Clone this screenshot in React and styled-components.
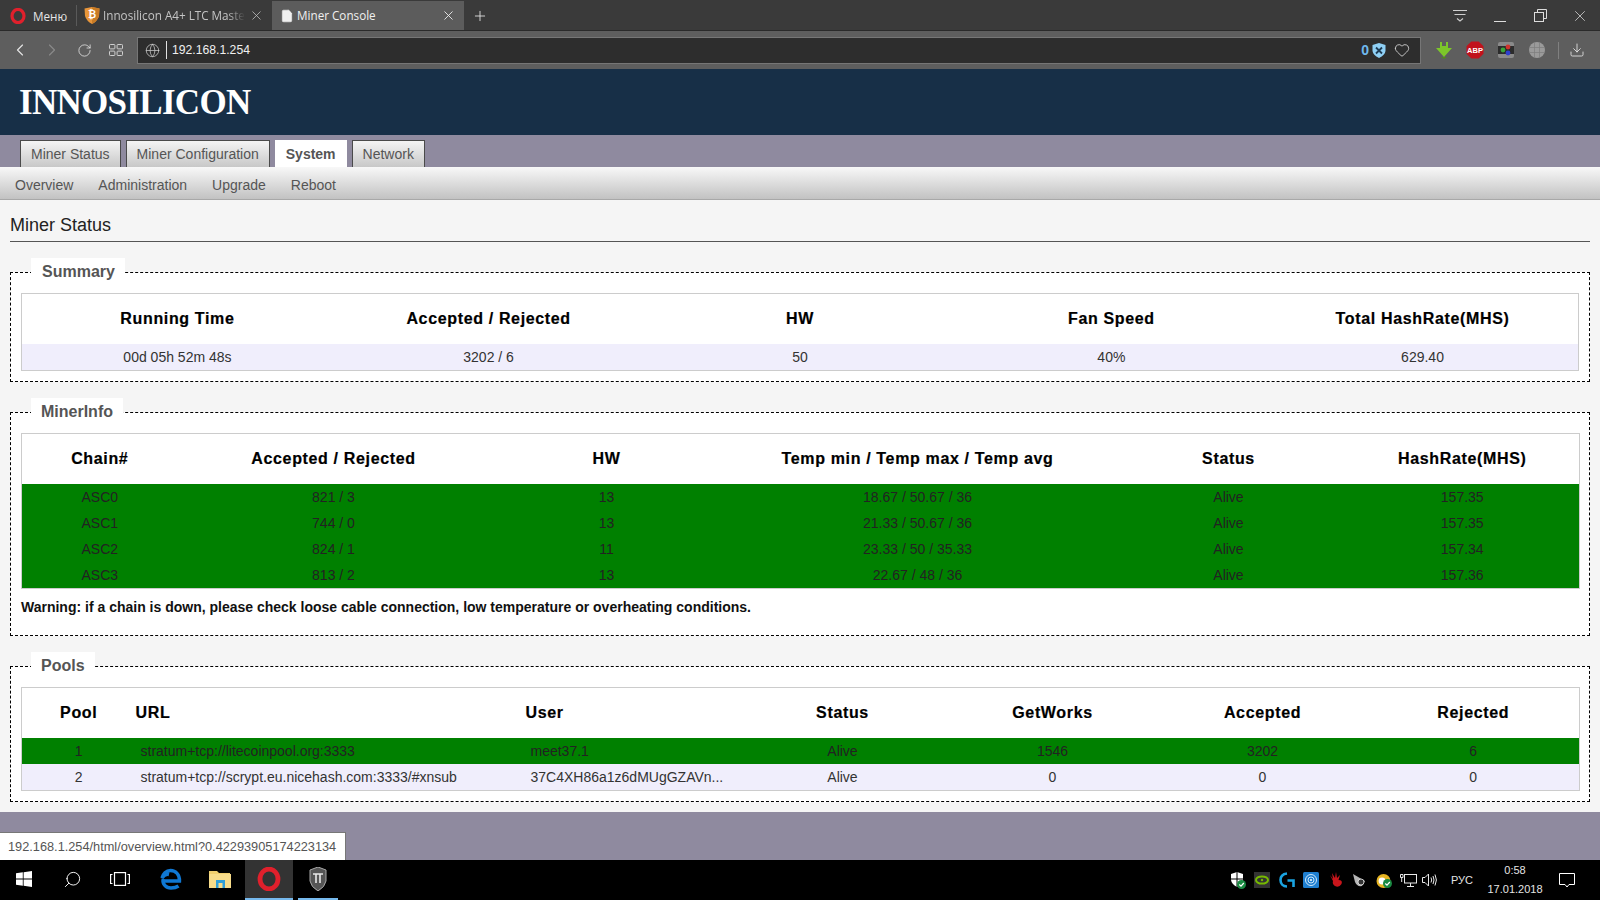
import styled, { createGlobalStyle } from 'styled-components';
import { ChevronLeft, ChevronRight, RotateCw, X, Plus, Heart, Download, Globe, Search, File } from 'lucide-react';

const GlobalStyle = createGlobalStyle`
  html, body {
    margin: 0;
    padding: 0;
    height: 100%;
    overflow: hidden;
    font-family: "Liberation Sans", Arial, sans-serif;
  }
`;

const Screen = styled.div`
  position: relative;
  display: flex;
  flex-direction: column;
  width: 1600px;
  height: 900px;
  overflow: hidden;
  background: #8f8a9f;
`;

/* browser chrome */
const TabStrip = styled.div`
  display: flex;
  align-items: stretch;
  height: 31px;
  flex: none;
  padding-top: 1px;
  box-sizing: border-box;
  background: #3a3a3a;
  border-bottom: 1px solid #2a2a2a;
  color: #e6e6e6;
  font-family: "Open Sans", sans-serif;
  font-size: 11.7px;
`;

const MenuButton = styled.div`
  display: flex;
  align-items: center;
  gap: 7px;
  width: 77px;
  padding-left: 10px;
  box-sizing: border-box;
  border-right: 1px solid #5a5a5a;
  margin: 4px 0;
`;

const BrowserTab = styled.div`
  display: flex;
  align-items: center;
  width: ${p => (p.$active ? '192px' : '195px')};
  padding: 0 8px 0 ${p => (p.$active ? '8px' : '7px')};
  box-sizing: border-box;
  gap: 3px;
  background: ${p => (p.$active ? '#5c5c5c' : 'transparent')};
  color: ${p => (p.$active ? '#f0f0f0' : '#c4c4c4')};
`;

const TabLabel = styled.span`
  white-space: nowrap;
  margin: -1px auto 0 0;
  mask-image: ${p => (p.$fade ? 'linear-gradient(to right, #000 88%, transparent 100%)' : 'none')};
`;

const NewTab = styled.div`
  display: flex;
  align-items: center;
  margin-left: 8px;
`;

const WindowControls = styled.div`
  display: flex;
  align-items: center;
  margin-left: auto;
`;

const WindowButton = styled.div`
  display: flex;
  align-items: center;
  justify-content: center;
  width: 40px;
  height: 30px;
`;

const Toolbar = styled.div`
  display: flex;
  align-items: center;
  height: 38px;
  flex: none;
  padding-left: 4px;
  background: #5e5e5e;
`;

const ToolButton = styled.div`
  display: flex;
  align-items: center;
  justify-content: center;
  width: 32px;
  height: 31px;
  color: ${p => (p.$dim ? '#8a8a8a' : '#e4e4e4')};
`;

const AddressBar = styled.div`
  display: flex;
  align-items: center;
  flex: 1;
  height: 27px;
  margin: 0 7px 0 5px;
  padding: 0 10px 0 7px;
  box-sizing: border-box;
  background: #2d2d2d;
  border: 1px solid #767676;
  color: #f0f0f0;
  font-size: 12.2px;
`;

const AddressDivider = styled.span`
  width: 1px;
  height: 18px;
  margin: 0 5px 0 6px;
  background: #e0e0e0;
`;

const AddressEnd = styled.div`
  display: flex;
  align-items: center;
  gap: 8px;
  margin-left: auto;
  color: #6fb9ee;
  font-weight: bold;
  font-size: 14px;
`;

const BlockCount = styled.span`
  margin-right: -5px;
`;

const Extensions = styled.div`
  display: flex;
  align-items: center;
  width: 172px;
  flex: none;
`;

const ExtensionSlot = styled.div`
  display: flex;
  align-items: center;
  justify-content: center;
  width: 31px;
  height: 30px;
`;

const ToolDivider = styled.span`
  width: 1px;
  height: 17px;
  margin: 0 10px 0 6px;
  background: #808080;
`;

/* miner page */
const Banner = styled.header`
  display: flex;
  align-items: center;
  height: 66px;
  flex: none;
  padding-left: 19px;
  box-sizing: border-box;
  background: #172f47;
`;

const Logo = styled.div`
  color: #fff;
  font-family: "Liberation Serif", serif;
  font-weight: bold;
  font-size: 35px;
  letter-spacing: -0.7px;
  line-height: 1;
`;

const MainNav = styled.nav`
  display: flex;
  align-items: flex-end;
  gap: 5px;
  height: 32px;
  flex: none;
  padding-left: 20px;
  box-sizing: border-box;
  background: #8f8a9f;
`;

const NavTab = styled.a`
  display: flex;
  align-items: center;
  height: 27px;
  padding: 0 ${p => (p.$active ? '11px' : '10px')};
  box-sizing: border-box;
  font-size: 14px;
  color: #555;
  font-weight: ${p => (p.$active ? 'bold' : 'normal')};
  background: ${p => (p.$active ? '#fff' : 'linear-gradient(#f4f4f4, #c8c8c8)')};
  border: ${p => (p.$active ? 'none' : '1px solid #4a4a4a')};
  border-bottom: none;
`;

const SubNav = styled.nav`
  display: flex;
  align-items: center;
  gap: 25px;
  height: 33px;
  flex: none;
  padding: 3px 0 0 15px;
  box-sizing: border-box;
  font-size: 14px;
  color: #555;
  background: linear-gradient(#f8f8f8, #c2c2c2);
  border-bottom: 1px solid #a8a8a8;
`;

const Content = styled.main`
  flex: none;
  height: 612px;
  padding: 0 10px;
  box-sizing: border-box;
  background: #f5f5f5;
`;

const PageTitle = styled.h2`
  margin: 0 0 16px;
  height: 42px;
  padding-top: 14px;
  box-sizing: border-box;
  font-size: 18px;
  line-height: 22px;
  font-weight: normal;
  color: #222;
  border-bottom: 1px solid #555;
`;

const Panel = styled.fieldset`
  margin: 0 0 16px;
  padding: 7px 10px 10px;
  min-width: 0;
  background: #fff;
  border: 1px dashed #000;
`;

const PanelTitle = styled.legend`
  margin-left: 10px;
  padding: 0 10px 0 ${p => p.$pad || 11}px;
  height: 28px;
  line-height: 28px;
  background: #fff;
  color: #555;
  font-size: 16px;
  font-weight: bold;
`;

const DataTable = styled.table`
  width: 100%;
  table-layout: fixed;
  border-collapse: collapse;
  border: 1px solid #ccc;
  font-size: 14px;
  color: #333;
`;

const Col = styled.col`
  width: ${p => p.$w}px;
`;

const HeadCell = styled.th`
  height: 50px;
  padding: 0;
  color: #000;
  font-size: 16px;
  letter-spacing: 0.65px;
  -webkit-text-stroke: 0.2px #000;
  text-align: ${p => (p.$left ? 'left' : 'center')};
`;

const Row = styled.tr`
  background: ${p => (p.$ok ? '#008000' : '#f0eefc')};
  color: ${p => (p.$ok ? '#222' : '#333')};
`;

const Cell = styled.td`
  height: 26px;
  padding: ${p => (p.$left ? '0 0 0 5px' : '0')};
  text-align: ${p => (p.$left ? 'left' : 'center')};
`;

const Warning = styled.p`
  margin: 10px 0;
  font-size: 14px;
  line-height: 16px;
  font-weight: bold;
  color: #111;
`;

const StatusTip = styled.div`
  position: absolute;
  left: 0;
  bottom: 40px;
  width: 346px;
  height: 28px;
  padding-left: 8px;
  box-sizing: border-box;
  line-height: 28px;
  font-size: 12.75px;
  color: #555;
  background: #fff;
  border-top: 1px solid #777;
  border-right: 1px solid #777;
  white-space: nowrap;
`;

/* taskbar */
const Taskbar = styled.footer`
  display: flex;
  align-items: stretch;
  height: 40px;
  margin-top: auto;
  flex: none;
  background: #000;
`;

const TaskItem = styled.div`
  display: flex;
  align-items: center;
  justify-content: center;
  width: ${p => p.$w || 48}px;
  margin-left: ${p => p.$gap || 0}px;
  background: ${p => (p.$active ? '#333' : 'transparent')};
  border-bottom: 2px solid ${p => (p.$open ? '#76b9ed' : 'transparent')};
  box-sizing: border-box;
`;

const Tray = styled.div`
  display: flex;
  align-items: center;
  margin-left: auto;
  padding-right: 25px;
  color: #e4e4e4;
`;

const TraySlot = styled.div`
  display: flex;
  align-items: center;
  justify-content: center;
  width: ${p => p.$w || 24.5}px;
  height: 40px;
`;

const Lang = styled.span`
  width: 42px;
  text-align: center;
  font-size: 11px;
`;

const Clock = styled.div`
  width: 64px;
  margin-right: 12px;
  font-size: 11px;
  line-height: 19px;
  text-align: center;
`;

const OperaLogo = ({ size = 16 }) => (
  <svg width={size} height={size} viewBox="0 0 16 16">
    <ellipse cx="8" cy="8" rx="6" ry="6.6" fill="none" stroke="#e0202c" strokeWidth="3.2" />
  </svg>
);

const BitcoinShield = () => (
  <svg width="16" height="17" viewBox="0 0 16 17">
    <path d="M0.5 1.5 L8 0 L15.5 1.5 L15 9 Q13.5 14 8 17 Q2.5 14 1 9 Z" fill="#e8963a" />
    <path d="M8 0 L15.5 1.5 L15 9 Q13.5 14 8 17 Z" fill="#c97b25" />
    <text x="8" y="11" fontSize="10" fontWeight="bold" fill="#fff" textAnchor="middle" fontFamily="Liberation Sans">₿</text>
  </svg>
);

const SpeedDial = () => (
  <svg width="14" height="12" viewBox="0 0 14 12" fill="none" stroke="#cfcfcf" strokeWidth="1">
    <rect x="0.5" y="0.5" width="5.4" height="4.4" rx="0.8" />
    <rect x="8.1" y="0.5" width="5.4" height="4.4" rx="0.8" />
    <rect x="0.5" y="7.1" width="5.4" height="4.4" rx="0.8" />
    <rect x="8.1" y="7.1" width="5.4" height="4.4" rx="0.8" />
  </svg>
);

const Tabs3 = () => (
  <svg width="16" height="16" viewBox="0 0 16 16" fill="none" stroke="#cfcfcf" strokeWidth="1.1">
    <path d="M1 2.5H15M2.5 6.5H13.5M5 10.5L8 13L11 10.5" />
  </svg>
);

const Minimize = () => (
  <svg width="14" height="14" viewBox="0 0 14 14"><path d="M1 12.5H13" stroke="#ddd" strokeWidth="1" /></svg>
);

const Restore = () => (
  <svg width="13" height="13" viewBox="0 0 13 13" fill="none" stroke="#ddd" strokeWidth="1">
    <rect x="0.5" y="3.5" width="9" height="9" />
    <path d="M3.5 3.5V0.5H12.5V9.5H9.5" />
  </svg>
);

const BlockShield = () => (
  <svg width="14" height="15" viewBox="0 0 14 15">
    <path d="M0.5 2 L7 0 L13.5 2 V8 Q13 12 7 15 Q1 12 0.5 8 Z" fill="#8fd0f5" />
    <path d="M4 4.5L10 10.5M10 4.5L4 10.5" stroke="#1e3c55" strokeWidth="1.8" />
  </svg>
);

const DownArrowExt = () => (
  <svg width="16" height="17" viewBox="0 0 16 17">
    <path d="M4 0H6V4H10V0H12V6H16L8 15L0 6H4Z" fill="#7cc62a" />
    <path d="M5 15H11L8 17Z" fill="#4e8a1c" />
  </svg>
);

const AbpBadge = () => (
  <svg width="18" height="18" viewBox="0 0 18 18">
    <path d="M5.3 0.5H12.7L17.5 5.3V12.7L12.7 17.5H5.3L0.5 12.7V5.3Z" fill="#c1121c" />
    <text x="9" y="12" fontSize="7.5" fontWeight="bold" fill="#fff" textAnchor="middle" fontFamily="Liberation Sans">ABP</text>
  </svg>
);

const ColorExt = () => (
  <svg width="16" height="16" viewBox="0 0 16 16">
    <rect width="16" height="16" rx="2" fill="#8a8a8a" />
    <rect y="4" width="16" height="8" fill="#2c2c2c" />
    <circle cx="5" cy="8" r="2.4" fill="#3aa53a" />
    <circle cx="10" cy="5" r="2.4" fill="#d0352c" />
    <circle cx="10" cy="11" r="2.4" fill="#2d3fd0" />
  </svg>
);

const WorldExt = () => (
  <svg width="16" height="16" viewBox="0 0 16 16" fill="none">
    <circle cx="8" cy="8" r="8" fill="#9a9a9a" />
    <path d="M0 5.5H16M0 10.5H16M5.5 0V16M10.5 0V16" stroke="#7d7d7d" strokeWidth="0.7" />
  </svg>
);

const WinLogo = () => (
  <svg width="16" height="16" viewBox="0 0 16 16" fill="#fff">
    <path d="M0 2.3L6.8 1.3V7.6H0ZM7.6 1.2L16 0V7.6H7.6ZM0 8.4H6.8V14.7L0 13.7ZM7.6 8.4H16V16L7.6 14.8Z" />
  </svg>
);

const TaskView = () => (
  <svg width="20" height="14" viewBox="0 0 20 14" fill="none" stroke="#fff" strokeWidth="1.2">
    <rect x="4.5" y="0.6" width="11" height="12.8" />
    <path d="M2.5 2.5H0.6V11.5H2.5M17.5 2.5H19.4V11.5H17.5" />
  </svg>
);

const EdgeLogo = () => (
  <svg width="22" height="22" viewBox="0 0 22 22" fill="none">
    <path d="M3 13H19.5C19.8 7 16 2.5 10.5 2.5C6 2.5 3 6 2 10C4 7 7 6 9 6.5" stroke="#0f78d4" strokeWidth="3.4" />
    <path d="M3.2 11C2 16 6 20 11 20C14 20 16.5 19.4 18.5 18" stroke="#0f78d4" strokeWidth="3.4" />
  </svg>
);

const FolderIcon = () => (
  <svg width="22" height="20" viewBox="0 0 22 20">
    <path d="M0 2H8L10 4H21V19H0Z" fill="#f0cf6e" />
    <rect y="5" width="22" height="14" fill="#f7dc8a" />
    <rect x="7" y="11" width="9" height="8" fill="#2f9fd8" />
    <rect x="9.5" y="14" width="4" height="5" fill="#f7dc8a" />
  </svg>
);

const TankShield = () => (
  <svg width="18" height="24" viewBox="0 0 18 24">
    <path d="M1 3L9 0L17 3V14Q16 20 9 24Q2 20 1 14Z" fill="#555" stroke="#a8a8a8" />
    <path d="M4 7H14M7 7V16M11 7V16" stroke="#e8e8e8" strokeWidth="1.6" />
  </svg>
);

const DefenderTray = () => (
  <svg width="16" height="17" viewBox="0 0 16 17">
    <path d="M1 2L7 0L13 2V8Q12.5 12 7 15Q1.5 12 1 8Z" fill="#fff" />
    <path d="M7 0V15M1 7H13" stroke="#000" strokeWidth="1" />
    <circle cx="11.5" cy="12.5" r="4.5" fill="#1a8a42" />
    <path d="M9.3 12.5L11 14.2L13.8 11" stroke="#fff" strokeWidth="1.2" fill="none" />
  </svg>
);

const NvidiaTray = () => (
  <svg width="16" height="16" viewBox="0 0 16 16">
    <rect width="16" height="16" fill="#333" />
    <ellipse cx="8" cy="8" rx="6" ry="3.6" fill="none" stroke="#76b900" strokeWidth="2" />
    <circle cx="8" cy="8" r="1.2" fill="#76b900" />
  </svg>
);

const LogitechTray = () => (
  <svg width="16" height="16" viewBox="0 0 16 16" fill="none" stroke="#1aa3e0" strokeWidth="2.6">
    <path d="M8 1.5C4 2 1.5 4.5 1.5 8C1.5 11.5 4 14.5 8 14.5" />
    <path d="M8.5 8.5H14.5V15" />
  </svg>
);

const RadarTray = () => (
  <svg width="16" height="16" viewBox="0 0 16 16" fill="none">
    <rect width="16" height="16" rx="1.5" fill="#1f7fd0" />
    <circle cx="8" cy="8" r="5.5" stroke="#cfe8fb" strokeWidth="1" />
    <circle cx="8" cy="8" r="3" stroke="#cfe8fb" strokeWidth="1" />
    <circle cx="8" cy="8" r="1" fill="#fff" />
  </svg>
);

const BloodyTray = () => (
  <svg width="16" height="16" viewBox="0 0 16 16">
    <path d="M2 3L5 7L4 1L7 6L8 0L9 6L12 3L10.5 8Q15 8 13.5 12Q11 16 7 14Q4 12 5 9Z" fill="#c8151b" />
  </svg>
);

const SpeakerTray = () => (
  <svg width="16" height="16" viewBox="0 0 16 16">
    <path d="M1 2L13 9L10 14Q5 15 3 10Z" fill="#b5b5b5" />
    <circle cx="9" cy="10" r="3" fill="#333" stroke="#eee" strokeWidth="0.8" />
  </svg>
);

const CheckTray = () => (
  <svg width="17" height="17" viewBox="0 0 17 17">
    <circle cx="7.5" cy="9" r="7" fill="#e6b422" />
    <circle cx="6" cy="9" r="3.4" fill="#fff" />
    <circle cx="11.5" cy="11.5" r="4.5" fill="#1a8a42" />
    <path d="M9.3 11.5L11 13.2L13.8 10" stroke="#fff" strokeWidth="1.2" fill="none" />
  </svg>
);

const NetworkTray = () => (
  <svg width="17" height="15" viewBox="0 0 17 15" fill="none" stroke="#e8e8e8" strokeWidth="1">
    <rect x="4.5" y="1.5" width="12" height="8.5" />
    <path d="M10.5 10V13.5M7 13.5H14M0.5 1.5H3V4.5H0.5ZM1.7 4.5V9" />
  </svg>
);

const VolumeTray = () => (
  <svg width="16" height="14" viewBox="0 0 16 14" fill="none" stroke="#e8e8e8" strokeWidth="1">
    <path d="M0.5 4.5H3L6.5 1V13L3 9.5H0.5Z" />
    <path d="M9 4.5Q10.4 7 9 9.5M11 3Q13 7 11 11M13 1.5Q15.8 7 13 12.5" />
  </svg>
);

const NotifyIcon = () => (
  <svg width="16" height="16" viewBox="0 0 16 16" fill="none" stroke="#fff" strokeWidth="1">
    <path d="M0.5 1.5H15.5V12.5H10L8 15L6 12.5H0.5Z" />
  </svg>
);

const App = () => {
  const chains = [
    ['ASC0', '821 / 3', '13', '18.67 / 50.67 / 36', 'Alive', '157.35'],
    ['ASC1', '744 / 0', '13', '21.33 / 50.67 / 36', 'Alive', '157.35'],
    ['ASC2', '824 / 1', '11', '23.33 / 50 / 35.33', 'Alive', '157.34'],
    ['ASC3', '813 / 2', '13', '22.67 / 48 / 36', 'Alive', '157.36'],
  ];

  return (
    <Screen>
      <GlobalStyle />
      <TabStrip>
        <MenuButton>
          <OperaLogo />
          <span>Меню</span>
        </MenuButton>
        <BrowserTab>
          <BitcoinShield />
          <TabLabel $fade>Innosilicon A4+ LTC Maste</TabLabel>
          <X size={15} strokeWidth={1.2} />
        </BrowserTab>
        <BrowserTab $active>
          <File size={14} fill="#f0f0f0" strokeWidth={1} />
          <TabLabel>Miner Console</TabLabel>
          <X size={15} strokeWidth={1.4} />
        </BrowserTab>
        <NewTab>
          <Plus size={16} strokeWidth={1.3} />
        </NewTab>
        <WindowControls>
          <WindowButton><Tabs3 /></WindowButton>
          <WindowButton><Minimize /></WindowButton>
          <WindowButton><Restore /></WindowButton>
          <WindowButton><X size={18} strokeWidth={1} color="#ddd" /></WindowButton>
        </WindowControls>
      </TabStrip>
      <Toolbar>
        <ToolButton><ChevronLeft size={20} strokeWidth={1.4} /></ToolButton>
        <ToolButton $dim><ChevronRight size={20} strokeWidth={1.4} /></ToolButton>
        <ToolButton><RotateCw size={15} strokeWidth={1.3} /></ToolButton>
        <ToolButton><SpeedDial /></ToolButton>
        <AddressBar>
          <Globe size={15} strokeWidth={1.1} color="#d8d8d8" />
          <AddressDivider />
          192.168.1.254
          <AddressEnd>
            <BlockCount>0</BlockCount>
            <BlockShield />
            <Heart size={16} strokeWidth={1.2} color="#e4e4e4" />
          </AddressEnd>
        </AddressBar>
        <Extensions>
          <ExtensionSlot><DownArrowExt /></ExtensionSlot>
          <ExtensionSlot><AbpBadge /></ExtensionSlot>
          <ExtensionSlot><ColorExt /></ExtensionSlot>
          <ExtensionSlot><WorldExt /></ExtensionSlot>
          <ToolDivider />
          <Download size={16} strokeWidth={1.3} color="#e4e4e4" />
        </Extensions>
      </Toolbar>

      <Banner>
        <Logo>INNOSILICON</Logo>
      </Banner>
      <MainNav>
        <NavTab>Miner Status</NavTab>
        <NavTab>Miner Configuration</NavTab>
        <NavTab $active>System</NavTab>
        <NavTab>Network</NavTab>
      </MainNav>
      <SubNav>
        <span>Overview</span>
        <span>Administration</span>
        <span>Upgrade</span>
        <span>Reboot</span>
      </SubNav>

      <Content>
        <PageTitle>Miner Status</PageTitle>

        <Panel>
          <PanelTitle>Summary</PanelTitle>
          <DataTable>
            <thead>
              <tr>
                <HeadCell>Running Time</HeadCell>
                <HeadCell>Accepted / Rejected</HeadCell>
                <HeadCell>HW</HeadCell>
                <HeadCell>Fan Speed</HeadCell>
                <HeadCell>Total HashRate(MHS)</HeadCell>
              </tr>
            </thead>
            <tbody>
              <Row>
                <Cell>00d 05h 52m 48s</Cell>
                <Cell>3202 / 6</Cell>
                <Cell>50</Cell>
                <Cell>40%</Cell>
                <Cell>629.40</Cell>
              </Row>
            </tbody>
          </DataTable>
        </Panel>

        <Panel>
          <PanelTitle $pad={10}>MinerInfo</PanelTitle>
          <DataTable>
            <colgroup>
              <Col $w={156} />
              <Col $w={312} />
              <Col $w={234} />
              <Col $w={388} />
              <Col $w={234} />
              <Col $w={234} />
            </colgroup>
            <thead>
              <tr>
                <HeadCell>Chain#</HeadCell>
                <HeadCell>Accepted / Rejected</HeadCell>
                <HeadCell>HW</HeadCell>
                <HeadCell>Temp min / Temp max / Temp avg</HeadCell>
                <HeadCell>Status</HeadCell>
                <HeadCell>HashRate(MHS)</HeadCell>
              </tr>
            </thead>
            <tbody>
              {chains.map(chain => (
                <Row $ok key={chain[0]}>
                  {chain.map((value, i) => <Cell key={i}>{value}</Cell>)}
                </Row>
              ))}
            </tbody>
          </DataTable>
          <Warning>Warning: if a chain is down, please check loose cable connection, low temperature or overheating conditions.</Warning>
        </Panel>

        <Panel>
          <PanelTitle $pad={10}>Pools</PanelTitle>
          <DataTable>
            <colgroup>
              <Col $w={114} />
              <Col $w={390} />
              <Col $w={212} />
              <Col $w={210} />
              <Col $w={210} />
              <Col $w={210} />
              <Col $w={212} />
            </colgroup>
            <thead>
              <tr>
                <HeadCell>Pool</HeadCell>
                <HeadCell $left>URL</HeadCell>
                <HeadCell $left>User</HeadCell>
                <HeadCell>Status</HeadCell>
                <HeadCell>GetWorks</HeadCell>
                <HeadCell>Accepted</HeadCell>
                <HeadCell>Rejected</HeadCell>
              </tr>
            </thead>
            <tbody>
              <Row $ok>
                <Cell>1</Cell>
                <Cell $left>stratum+tcp://litecoinpool.org:3333</Cell>
                <Cell $left>meet37.1</Cell>
                <Cell>Alive</Cell>
                <Cell>1546</Cell>
                <Cell>3202</Cell>
                <Cell>6</Cell>
              </Row>
              <Row>
                <Cell>2</Cell>
                <Cell $left>stratum+tcp://scrypt.eu.nicehash.com:3333/#xnsub</Cell>
                <Cell $left>37C4XH86a1z6dMUgGZAVn...</Cell>
                <Cell>Alive</Cell>
                <Cell>0</Cell>
                <Cell>0</Cell>
                <Cell>0</Cell>
              </Row>
            </tbody>
          </DataTable>
        </Panel>
      </Content>

      <StatusTip>192.168.1.254/html/overview.html?0.42293905174223134</StatusTip>

      <Taskbar>
        <TaskItem><WinLogo /></TaskItem>
        <TaskItem><Search size={19} strokeWidth={1.2} color="#fff" style={{ transform: 'scaleX(-1)' }} /></TaskItem>
        <TaskItem><TaskView /></TaskItem>
        <TaskItem $gap={3}><EdgeLogo /></TaskItem>
        <TaskItem $gap={1}><FolderIcon /></TaskItem>
        <TaskItem $active $open $gap={1}><OperaLogo size={24} /></TaskItem>
        <TaskItem $open $w={40} $gap={5}><TankShield /></TaskItem>
        <Tray>
          <TraySlot><DefenderTray /></TraySlot>
          <TraySlot><NvidiaTray /></TraySlot>
          <TraySlot><LogitechTray /></TraySlot>
          <TraySlot><RadarTray /></TraySlot>
          <TraySlot><BloodyTray /></TraySlot>
          <TraySlot><SpeakerTray /></TraySlot>
          <TraySlot><CheckTray /></TraySlot>
          <TraySlot $w={22}><NetworkTray /></TraySlot>
          <TraySlot $w={22}><VolumeTray /></TraySlot>
          <Lang>РУС</Lang>
          <Clock>
            <div>0:58</div>
            <div>17.01.2018</div>
          </Clock>
          <NotifyIcon />
        </Tray>
      </Taskbar>
    </Screen>
  );
};

export default App;
